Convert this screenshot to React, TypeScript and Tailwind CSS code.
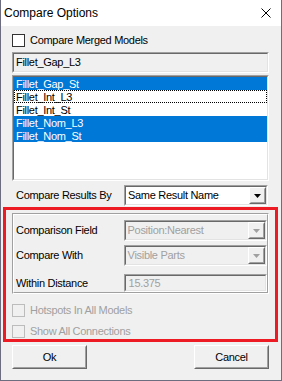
import React from 'react'

const Sunken: React.FC<{ className?: string; inner?: string; children?: React.ReactNode }> = ({ className = '', inner = '', children }) => (
  <div className={`border border-t-[#a0a0a0] border-l-[#a0a0a0] border-b-white border-r-white ${className}`}>
    <div className={`h-full w-full border border-t-[#696969] border-l-[#696969] border-b-[#e3e3e3] border-r-[#e3e3e3] ${inner}`}>
      {children}
    </div>
  </div>
)

const Raised: React.FC<{ className?: string; inner?: string; children?: React.ReactNode }> = ({ className = '', inner = '', children }) => (
  <div className={`border border-t-white border-l-white border-b-[#696969] border-r-[#696969] ${className}`}>
    <div className={`h-full w-full border border-t-[#f0f0f0] border-l-[#f0f0f0] border-b-[#a0a0a0] border-r-[#a0a0a0] bg-[#f0f0f0] ${inner}`}>
      {children}
    </div>
  </div>
)

const Combo: React.FC<{ value: string; disabled?: boolean }> = ({ value, disabled }) => (
  <Sunken className="h-[21px] w-[144px]" inner={`flex items-center ${disabled ? 'bg-[#f0f0f0]' : 'bg-white'}`}>
    <span className={`flex-1 pl-[2px] ${disabled ? 'text-[#a0a0a0]' : 'text-black'}`}>{value}</span>
    <Raised className="h-[17px] w-[17px]" inner="flex items-center justify-center">
      <svg width="7" height="4" viewBox="0 0 7 4">
        <polygon points="0,0 7,0 3.5,4" fill={disabled ? '#a0a0a0' : '#000'} />
      </svg>
    </Raised>
  </Sunken>
)

const Check: React.FC<{ label: string; disabled?: boolean }> = ({ label, disabled }) => (
  <div className="flex h-[16px] items-center gap-[5px]">
    <div className={`h-[13px] w-[13px] border ${disabled ? 'border-[#bcbcbc] bg-[#f0f0f0]' : 'border-[#333333] bg-white'}`} />
    <span className={disabled ? 'text-[#a0a0a0]' : 'text-black'}>{label}</span>
  </div>
)

const items = [
  { name: 'Fillet_Gap_St', sel: true },
  { name: 'Fillet_Int_L3', sel: false, focus: true },
  { name: 'Fillet_Int_St', sel: false },
  { name: 'Fillet_Nom_L3', sel: true },
  { name: 'Fillet_Nom_St', sel: true },
]

const App: React.FC = () => {
  return (
    <div className="flex h-[381px] w-[282px] flex-col border-x border-b border-[#6d6d80] bg-[#f0f0f0] font-['Liberation_Sans',Arial,sans-serif] text-[11px] tracking-[-0.3px] text-black">
      <div className="flex h-[26px] items-center justify-between bg-white pl-[3px] pr-[10px]">
        <span className="text-[12px] tracking-normal">Compare Options</span>
        <svg width="10" height="10" viewBox="0 0 10 10">
          <path d="M0.5 0.5 L9.5 9.5 M9.5 0.5 L0.5 9.5" stroke="#000" strokeWidth="1" />
        </svg>
      </div>

      <div className="flex flex-1 flex-col pl-[11px] pr-[12px]">
        <div className="mt-[6px]">
          <Check label="Compare Merged Models" />
        </div>

        <Sunken className="mt-[4px] h-[21px]" inner="flex items-center bg-[#f0f0f0] pl-[2px]">
          Fillet_Gap_L3
        </Sunken>

        <Sunken className="mt-[2px] h-[106px]" inner="bg-white">
          {items.map((it) => (
            <div
              key={it.name}
              className={`h-[13px] pl-[1px] leading-[12px] ${it.sel ? 'bg-[#0078d7] text-white' : 'text-black'} ${it.focus ? 'border border-dotted border-black' : 'border border-transparent'}`}
            >
              {it.name}
            </div>
          ))}
        </Sunken>

        <div className="mt-[4px] flex h-[21px] items-center">
          <span className="w-[112px] pl-[4px]">Compare Results By</span>
          <Combo value="Same Result Name" />
        </div>

        <div className="-mx-[9px] mt-[1px] border-[3px] border-[#ed1c24] px-[6px] pt-[3px]">
          <div className="border border-t-[#a0a0a0] border-l-[#a0a0a0] border-b-white border-r-white">
            <div className="border border-t-white border-l-white border-b-[#a0a0a0] border-r-[#a0a0a0] pl-[2px] pt-[5px]">
              <div className="flex h-[21px] items-center">
                <span className="w-[108px]">Comparison Field</span>
                <Combo value="Position:Nearest" disabled />
              </div>
              <div className="mt-[4px] flex h-[21px] items-center">
                <span className="w-[108px]">Compare With</span>
                <Combo value="Visible Parts" disabled />
              </div>
              <div className="mt-[8px] flex h-[18px] items-center">
                <span className="w-[108px]">Within Distance</span>
                <Sunken className="h-[18px] w-[144px]" inner="flex items-center bg-[#f0f0f0] pl-[3px] text-[#a0a0a0]">
                  15.375
                </Sunken>
              </div>
            </div>
          </div>
          <div className="mt-[8px]">
            <Check label="Hotspots In All Models" disabled />
          </div>
          <div className="mt-[5px]">
            <Check label="Show All Connections" disabled />
          </div>
        </div>

        <div className="mt-[3px] flex justify-between">
          <Raised className="h-[24px] w-[75px]" inner="flex items-center justify-center">
            Ok
          </Raised>
          <Raised className="h-[24px] w-[75px]" inner="flex items-center justify-center">
            Cancel
          </Raised>
        </div>
      </div>
    </div>
  )
}

export default App
